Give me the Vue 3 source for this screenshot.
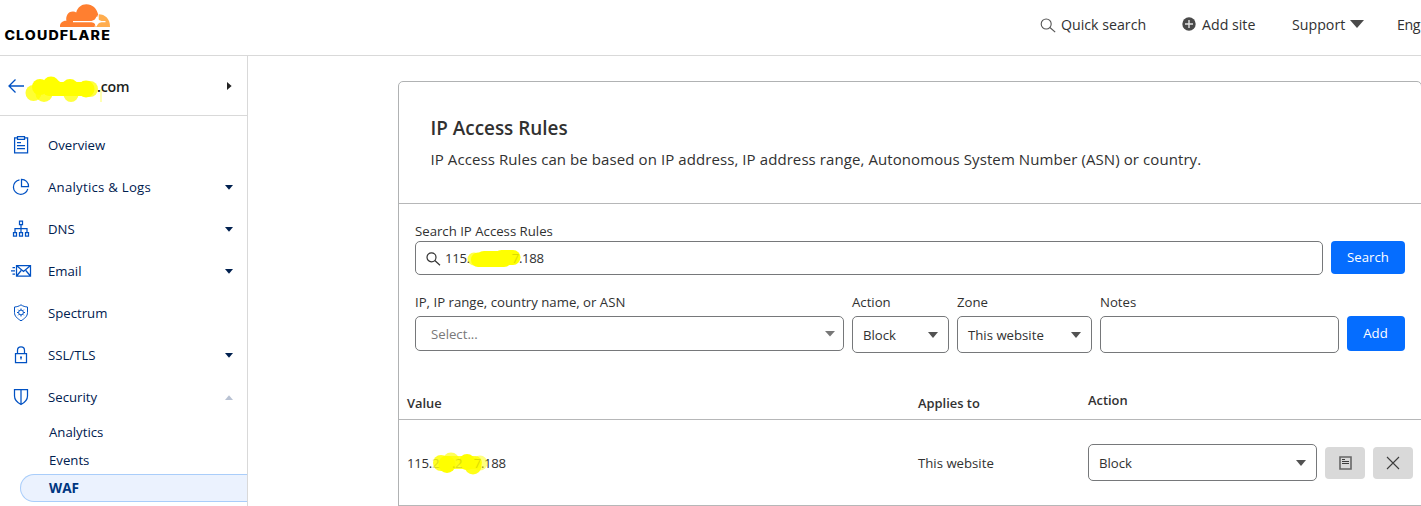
<script setup>
const nav = [
  { label: 'Overview', icon: 'clipboard' },
  { label: 'Analytics & Logs', icon: 'pie', caret: 'down', wide: true },
  { label: 'DNS', icon: 'tree', caret: 'down' },
  { label: 'Email', icon: 'mail', caret: 'down' },
  { label: 'Spectrum', icon: 'spectrum' },
  { label: 'SSL/TLS', icon: 'lock', caret: 'down' },
  { label: 'Security', icon: 'shield', caret: 'up' },
]
const sub = ['Analytics', 'Events', 'WAF']
const fields = [
  { label: 'Action', value: 'Block', cls: 'f-action', caret: true },
  { label: 'Zone', value: 'This website', cls: 'f-zone', caret: true },
  { label: 'Notes', value: '', cls: 'f-notes' },
]
</script>

<template>
  <div class="page">
    <header class="top">
      <svg class="logo" width="112" height="44" viewBox="0 0 112 44">
        <path d="M60 27c-.3-4 2.400-6.300 6.400-6.200-.8-4.500 1.500-9.600 6.800-9.300 1.200 0 2.200.4 3 .9C77.700 7.200 81.500 4.200 86.300 4.200c6.200 0 10.400 4.200 11.800 10.100l-2.500 6.900-1 5.800Z" fill="#ff7f30" />
        <path d="M98.700 14.300c6.300 0 11.600 4.700 11.300 12.700H95.300l1-4 2.400-3Z" fill="#ffad4e" />
        <path d="M73 21h18.500c2.800-.6 4.200-2 5-4.700.8 2.700 2.200 4.100 5 4.700h4v1.300h-4c-2.800.6-4.200 2-5 4.700-.8-2.700-2.200-4.100-5-4.700H73Z" fill="#fff" />
        <text class="brand" transform="scale(1.1 1)" x="4" y="39.900" textLength="95.800">CLOUDFLARE</text>
      </svg>
      <nav class="links">
        <span class="link search">
          <svg width="16" height="15" viewBox="0 0 16 15"><circle cx="6.200" cy="6" r="5" /><path d="m9.900 9.500 5.300 4.700" /></svg>Quick search
        </span>
        <span class="link add">
          <svg width="14" height="14" viewBox="0 0 14 14"><circle cx="7" cy="7" r="6.700" class="solid" /><path d="M7 3v8M3 7h8" class="plus" /></svg>Add site
        </span>
        <span class="link support">
          Support<svg width="14" height="8" viewBox="0 0 14 8"><path d="M0 0h14L7 8Z" class="solid" /></svg>
        </span>
        <span class="link">Eng</span>
      </nav>
    </header>

    <div class="body">
      <aside class="side">
        <div class="site">
          <svg class="back" width="17" height="16" viewBox="0 0 17 16"><path d="M1 8h15M7.500 1.500 1 8l6.500 6.500" /></svg>
          <span class="domain">.com
            <svg class="mark" width="80" height="30" viewBox="0 0 80 30">
              <g fill="#ffff00">
                <circle cx="8.500" cy="18" r="8" opacity=".8" /><circle cx="15" cy="12" r="8" /><circle cx="19" cy="18.500" r="8.500" opacity=".8" />
                <circle cx="26" cy="10" r="8.500" /><circle cx="30" cy="13" r="8" /><circle cx="45" cy="12.500" r="8.500" /><circle cx="46" cy="19.500" r="7.500" opacity=".75" />
                <circle cx="61" cy="14" r="8.500" /><circle cx="65" cy="14" r="8" opacity=".75" /><rect x="18" y="7" width="46" height="14" rx="6" />
                <path d="M76 14v13" stroke="#ffff00" stroke-width="1.500" opacity=".4" />
              </g>
            </svg>
          </span>
          <svg class="tri" width="5" height="8" viewBox="0 0 5 8"><path d="M0 0v8l4.600-4Z" /></svg>
        </div>
        <div class="menu">
          <div v-for="n in nav" :key="n.label" class="item">
            <svg class="ico" width="22" height="20" viewBox="0 0 22 20">
              <g v-if="n.icon === 'clipboard'"><path d="M7.500 2.800H4.600v15h13v-15h-2.900M7.500 1.500h7v2.800h-7Z" /><path d="M7 7.500h4M7 10.500h8M7 13.500h8" /></g>
              <g v-else-if="n.icon === 'pie'"><path d="M9.500 2.800a7.300 7.300 0 1 0 8.300 9" /><path d="M11.500 2.300v7.200h7a7 7 0 0 0-7-7.200Z" /></g>
              <g v-else-if="n.icon === 'tree'"><path d="M9.500 2h3v3.500h-3ZM11 5.500v7.500M5 13V9.500h12V13M3.500 13.500h3v3.500h-3ZM9.500 13.500h3v3.500h-3ZM15.500 13.500h3v3.500h-3Z" /></g>
              <g v-else-if="n.icon === 'mail'"><path d="M6.500 4.500h14v10.500h-14ZM7 5l6.500 5.500L20 5M7 14.500l4.200-5M20 14.500l-4.200-5M2.500 6.500H5M1 9.800h4M2.500 13H5" /></g>
              <g v-else-if="n.icon === 'spectrum'" class="fine"><path d="M11 1.800c2 1.500 4.200 2 6.500 2.200v5.500c0 3.800-2.800 6-6.500 8.300-3.700-2.300-6.500-4.500-6.500-8.300V4C6.800 3.800 9 3.300 11 1.800Z" /><circle cx="11" cy="9.500" r="2.400" /><path d="M11 5.500v1.500M11 12v1.500M7 9.500h1.500M13.500 9.500H15M8.200 6.700l1 1M12.800 11.300l1 1M13.800 6.700l-1 1M9.200 11.300l-1 1" /></g>
              <g v-else-if="n.icon === 'lock'"><path d="M5.500 8.500h11V17.500h-11ZM7.500 8.500V5.500c0-4.700 7-4.700 7 0v3M11 11.500v3M10 12h2" /></g>
              <g v-else><path d="M4.500 2.500h13V9c0 4-2.700 6.500-6.500 8.500C7.200 15.500 4.500 13 4.500 9ZM11 2.500v15" /></g>
            </svg>
            <span class="label" :class="{ wide: n.wide }">{{ n.label }}</span>
            <svg v-if="n.caret" class="caret" :class="n.caret" width="8" height="5" viewBox="0 0 8 5"><path d="M0 0h8L4 4.800Z" /></svg>
          </div>
          <div v-for="s in sub" :key="s" class="sub" :class="{ active: s === 'WAF' }">{{ s }}</div>
        </div>
      </aside>

      <main class="main">
        <section class="card">
          <div class="intro">
            <h1>IP Access Rules</h1>
            <p>IP Access Rules can be based on IP address, IP address range, Autonomous System Number (ASN) or country.</p>
          </div>

          <div class="forms">
            <div class="caption">Search IP Access Rules</div>
            <div class="row search-row">
              <div class="box query">
                <svg class="glass" width="15" height="14" viewBox="0 0 15 14"><circle cx="5.500" cy="5.300" r="4.500" /><path d="m8.800 8.500 5.200 4.800" /></svg>
                <span class="ip">115.<span class="hidden-part">
                  <svg class="mark-a" width="58" height="22" viewBox="0 0 58 22"><g fill="#ffff00"><circle cx="8" cy="11" r="6.500" opacity=".7" /><rect x="5" y="4.500" width="26" height="14.500" rx="7" /><rect x="10" y="3" width="36" height="16" rx="8" /><rect x="28" y="2" width="26.500" height="15" rx="7.500" /><circle cx="34" cy="12" r="7" /></g></svg>
                  <span class="ghost end">7</span>
                </span>.188</span>
              </div>
              <button class="btn btn-search">Search</button>
            </div>

            <div class="row add-row">
              <div class="field f-target">
                <div class="caption">IP, IP range, country name, or ASN</div>
                <div class="box short"><span class="placeholder">Select...</span><svg class="arrow pale" width="10" height="6" viewBox="0 0 10 6"><path d="M0 0h10L5 5.500Z" /></svg></div>
              </div>
              <div v-for="f in fields" :key="f.label" class="field" :class="f.cls">
                <div class="caption">{{ f.label }}</div>
                <div class="box tall">{{ f.value }}<svg v-if="f.caret" class="arrow" width="10" height="6" viewBox="0 0 10 6"><path d="M0 0h10L5 6Z" /></svg></div>
              </div>
              <button class="btn btn-add">Add</button>
            </div>
          </div>

          <div class="grid head">
            <span>Value</span><span>Applies to</span><span class="raise">Action</span>
          </div>
          <div class="grid entry">
            <span class="ip">115.<span class="hidden-part narrow">
              <svg class="mark-b" width="58" height="24" viewBox="0 0 58 24"><g fill="#ffff00"><circle cx="9" cy="11" r="8" opacity=".85" /><circle cx="15" cy="12.500" r="8.500" /><circle cx="19" cy="9" r="8.500" opacity=".65" /><rect x="7" y="4" width="43" height="13" rx="6.500" opacity=".8" /><circle cx="35" cy="10" r="8" /><circle cx="41" cy="14" r="8.500" opacity=".9" /><circle cx="48" cy="11" r="7.500" opacity=".5" /></g></svg>
              <span class="ghost start">2</span><span class="ghost mid">.2</span><span class="ghost end">7</span>
            </span>.188</span>
            <span class="applies">This website</span>
            <div class="actions">
              <div class="box tall">Block<svg class="arrow" width="10" height="6" viewBox="0 0 10 6"><path d="M0 0h10L5 6Z" /></svg></div>
              <button class="tool"><svg width="13" height="14" viewBox="0 0 13 14"><path d="M1 1h11v12H1Z" class="frame" /><path d="M3 3.500h3M3 5.500h7M3 7.500h7" /></svg></button>
              <button class="tool"><svg width="14" height="14" viewBox="0 0 14 14"><path d="m1 1 12 12M13 1 1 13" /></svg></button>
            </div>
          </div>
        </section>
      </main>
    </div>
  </div>
</template>

<style>
body { margin: 0; }
</style>
<style scoped>
* { box-sizing: border-box; }
.page { width: 1421px; height: 506px; overflow: hidden; background: #fff; color: #313131; font-family: "Open Sans", "Noto Sans", sans-serif; font-size: 13.2px; line-height: 18px; }
.top { height: 56px; border-bottom: 1px solid #d9d9d9; display: flex; justify-content: space-between; }
.logo { flex: none; }
.brand { font: 800 12.9px Inter, sans-serif; fill: #000; }
.links { display: flex; align-items: center; height: 49px; width: 381px; flex: none; font-size: 14.2px; white-space: nowrap; }
.link { display: flex; align-items: center; flex: none; }
.link:last-child { letter-spacing: -0.4px; }
.link svg { fill: none; stroke: #555; stroke-width: 1.1; flex: none; }
.link .solid { fill: #4a4a4a; stroke: none; }
.link .plus { stroke: #e4e4e4; stroke-width: 1.4; }
.search { width: 142px; }
.search svg { margin: 2px 5px 0 0; }
.add { width: 110px; }
.add svg { margin: -1px 6px 0 0; }
.support { width: 105px; justify-content: flex-start; }
.support svg { margin: -1px 0 0 5px; }

.body { display: flex; }
.side { width: 248px; flex: none; height: 450px; border-right: 1px solid #d9d9d9; color: #00204f; }
.site { height: 60px; padding: 1px 15px 0 8px; border-bottom: 1px solid #d9d9d9; display: flex; align-items: center; font-size: 14.2px; font-weight: 600; color: #1d1f20; }
.back { fill: none; stroke: #0051c3; stroke-width: 1.3; }
.domain { position: relative; margin: 2px 0 0 72px; letter-spacing: -0.2px; }
.mark { position: absolute; left: -72px; top: -3px; }
.tri { margin-left: auto; margin-top: -1px; fill: #222; }
.menu { padding-top: 8px; }
.item { height: 42px; display: flex; align-items: center; padding: 0 14px 0 10px; }
.ico { fill: none; stroke: #0051c3; stroke-width: 1.25; margin-right: 16px; }
.fine { stroke-width: 1; }
.wide { letter-spacing: 0.25px; }
.caret { margin-left: auto; fill: #00204f; }
.caret.up { transform: rotate(180deg); fill: #b9c2d3; }
.sub { height: 28px; padding-left: 49px; line-height: 28px; }
.active { margin-left: 20px; padding-left: 28px; line-height: 26px; font-weight: 700; font-size: 13.6px; color: #003681; background: #ebf2fe; border: 1px solid #a9cdfa; border-right: 0; border-radius: 14px 0 0 14px; }

.main { flex: none; padding: 25px 0 0 150px; }
.card { width: 1024px; height: 460px; border: 1px solid #b0b2b3; border-radius: 5px; }
.intro { height: 122px; border-bottom: 1px solid #b6b7b8; padding: 34px 0 0 31.5px; }
h1 { font-size: 18.9px; line-height: 24px; font-weight: 600; margin: 0; }
p { font-size: 15px; line-height: 22px; letter-spacing: 0.085px; margin: 8px 0 0; white-space: nowrap; }
.forms { padding: 18px 16px 0; }
.row { display: flex; gap: 8px; }
.search-row { margin-top: 1px; }
.add-row { margin-top: 18px; }
.box { border: 1px solid #76787a; border-radius: 5px; background: #fff; display: flex; align-items: center; padding: 0 10px; }
.query { width: 908px; height: 34px; padding-left: 11px; }
.glass { fill: none; stroke: #333; stroke-width: 1.2; margin: 2px 4px 0 -1px; }
.ip { display: flex; letter-spacing: -0.3px; white-space: nowrap; }
.hidden-part { display: block; position: relative; width: 49px; }
.mark-a { position: absolute; left: -4px; top: -1px; }
.mark-b { position: absolute; left: 0; top: -2px; }
.ghost { position: absolute; top: 0; color: #8c8c00; opacity: 0.3; }
.ghost.start { left: 0; }
.ghost.mid { left: 20px; }
.ghost.end { right: 0; }
.btn { border: 0; border-radius: 4px; background: #056dff; color: #fff; font: inherit; padding: 0; display: flex; align-items: center; justify-content: center; flex: none; }
.btn-search { width: 74px; height: 33px; padding-bottom: 1px; }
.btn-add { width: 58px; height: 35px; margin-top: 23px; padding: 0 1px 1px 0; }
.field .box { margin-top: 5px; }
.f-target { width: 429px; }
.f-action { width: 97px; }
.f-zone { width: 135px; }
.f-notes { width: 239px; }
.short { height: 35px; padding: 0 8px 0 15px; }
.tall { height: 37px; }
.placeholder { color: #797979; }
.arrow { margin-left: auto; margin-top: 1px; fill: #525252; }
.arrow.pale { fill: #777; margin-top: 0; }
.grid { display: grid; grid-template-columns: 511px 170px 325px; padding-left: 8px; align-items: center; }
.head { height: 67px; padding-top: 34px; border-bottom: 1px solid #b6b7b8; font-weight: 600; font-size: 12.9px; }
.raise { position: relative; top: -3px; }
.entry { height: 86px; border-bottom: 1px solid #b6b7b8; }
.actions { display: flex; align-items: center; gap: 8px; }
.actions .box { width: 229px; }
.tool { width: 40px; height: 32px; border: 0; border-radius: 4px; background: #d9d9d9; padding: 0; display: flex; align-items: center; justify-content: center; }
.tool svg { fill: none; stroke: #3d3d3d; stroke-width: 1.1; }
.tool .frame { stroke: #666; stroke-width: 1.6; }
</style>
